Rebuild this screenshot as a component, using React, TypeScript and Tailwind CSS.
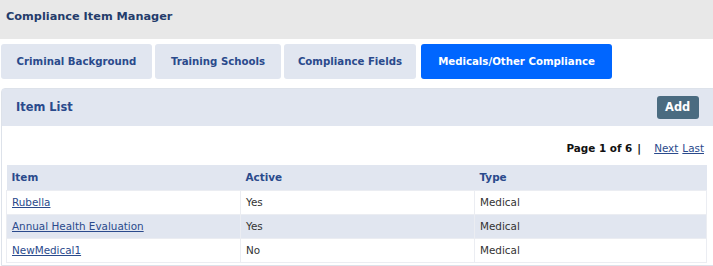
import { useState } from 'react';

const tabs = [
    { label: 'Criminal Background', w: 'w-[151px]' },
    { label: 'Training Schools', w: 'w-[126px]' },
    { label: 'Compliance Fields', w: 'w-[132px]' },
    { label: 'Medicals/Other Compliance', w: 'w-[191px]' },
];

const rows = [
    { item: 'Rubella', active: 'Yes', type: 'Medical' },
    { item: 'Annual Health Evaluation', active: 'Yes', type: 'Medical' },
    { item: 'NewMedical1', active: 'No', type: 'Medical' },
];

export default function App() {
    const [activeTab, setActiveTab] = useState(3);

    return (
        <div className="w-[713px] h-[266px] overflow-hidden bg-white text-[10.4px] text-[#333]" style={{ fontFamily: '"DejaVu Sans", Verdana, sans-serif' }}>
            <div className="h-[39px] bg-[#e8e8e8] flex items-center px-[6px] pb-[4px]">
                <h1 className="font-bold text-[11.3px] text-[#243c6b]">Compliance Item Manager</h1>
            </div>

            <div className="flex pt-[5px] pl-[1px]">
                {tabs.map((t, i) => (
                    <button
                        key={t.label}
                        onClick={() => setActiveTab(i)}
                        className={`${t.w} h-[35px] shrink-0 rounded-[3px] font-bold text-[10.2px] ${i === 0 ? '' : i === 3 ? 'ml-[5px]' : 'ml-[3px]'} ${i === activeTab ? 'bg-[#0066ff] text-white' : 'bg-[#e1e6f0] text-[#2a4a8c]'}`}
                    >
                        {t.label}
                    </button>
                ))}
            </div>

            <div className="mt-[9px] ml-[1px] w-[716px] border border-[#dde2ea] rounded-tl-[4px]">
                <div className="h-[37px] bg-[#e1e6f0] flex items-center pl-[14px]">
                    <h2 className="font-bold text-[11.4px] text-[#2a4a8c]">Item List</h2>
                    <button className="ml-[584px] h-[23px] w-[42px] rounded-[3px] bg-[#4a6b80] text-white font-bold text-[11.4px]">Add</button>
                </div>

                <div className="pl-[4px] pb-[2px]">
                    <div className="w-[701px] h-[39px] flex items-center justify-end pr-[3px] pt-[6px]">
                        <span className="font-bold text-[#111]">Page 1 of 6</span>
                        <span className="font-bold text-[#111] ml-[5px]">|</span>
                        <a href="#" className="ml-[13px] text-[#2a4a8c] underline">Next</a>
                        <a href="#" className="ml-[4px] text-[#2a4a8c] underline">Last</a>
                    </div>

                    <table className="w-[701px] border-collapse text-left table-fixed">
                        <thead>
                            <tr className="bg-[#e1e6f0] h-[25px]">
                                <th className="w-[234px] px-[5px] pt-[1px] font-bold text-[#2a4a8c]">Item</th>
                                <th className="w-[234px] px-[5px] pt-[1px] font-bold text-[#2a4a8c]">Active</th>
                                <th className="px-[5px] pt-[1px] font-bold text-[#2a4a8c]">Type</th>
                            </tr>
                        </thead>
                        <tbody>
                            {rows.map((r, i) => (
                                <tr key={r.item} className={`h-[24px] ${i % 2 === 1 ? 'bg-[#e1e6f0]' : 'bg-white'}`}>
                                    <td className="px-[5px] pt-[1px] border border-[#ebedf2]">
                                        <a href="#" className="text-[#2a4a8c] underline">{r.item}</a>
                                    </td>
                                    <td className="px-[5px] pt-[1px] border border-[#ebedf2]">{r.active}</td>
                                    <td className="px-[5px] pt-[1px] border border-[#ebedf2]">{r.type}</td>
                                </tr>
                            ))}
                        </tbody>
                    </table>
                </div>
            </div>
        </div>
    );
}
